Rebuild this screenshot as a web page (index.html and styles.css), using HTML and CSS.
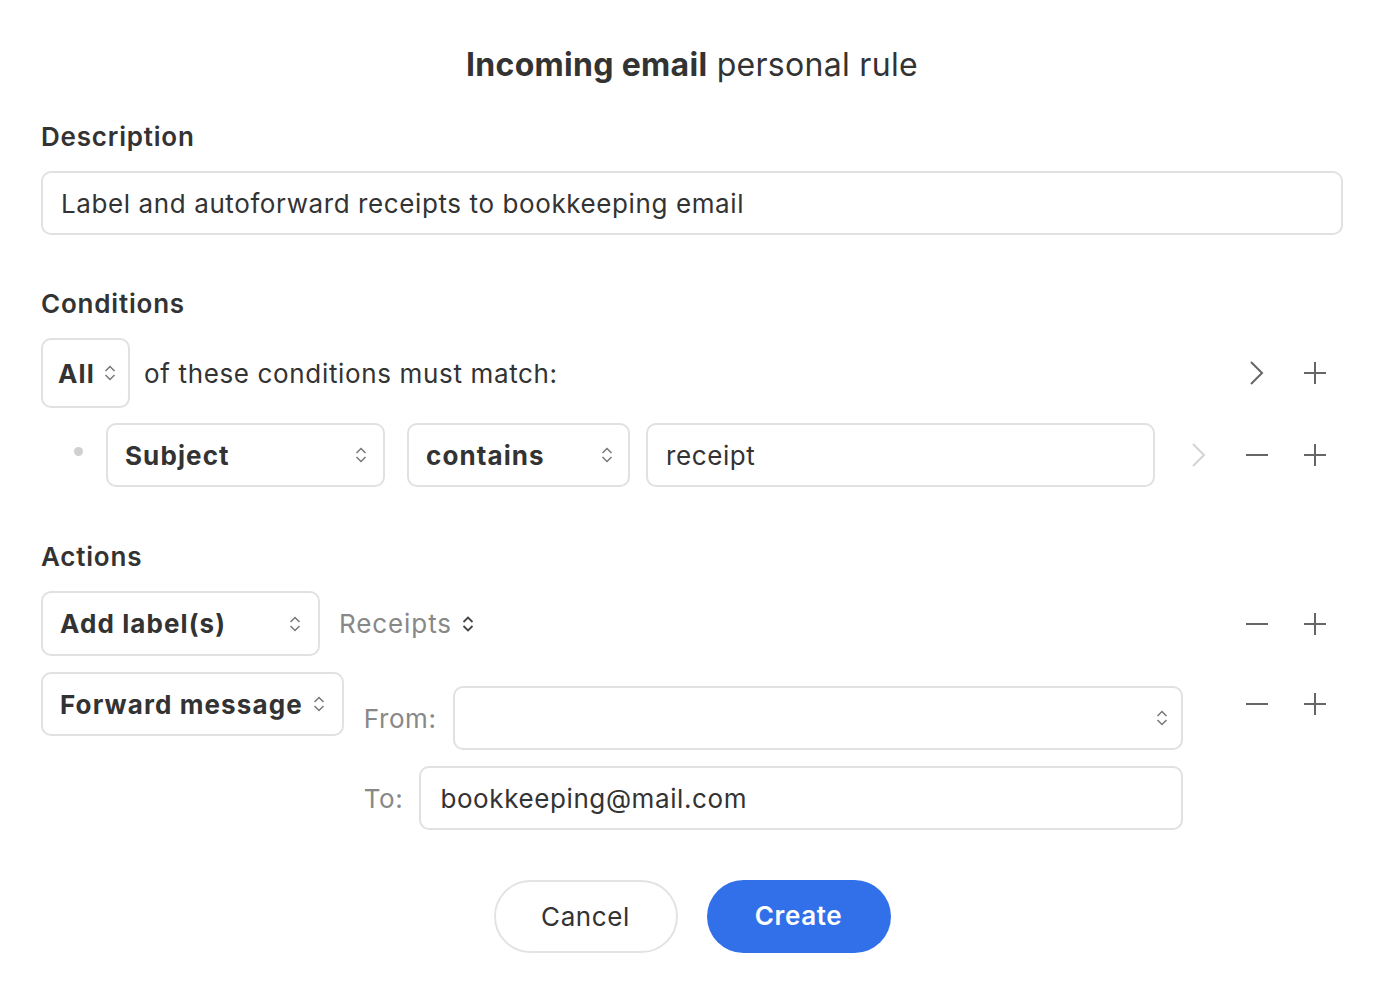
FILE: index.html
```html
<!DOCTYPE html>
<html>
<head>
<meta charset="utf-8">
<link rel="stylesheet" href="styles.css">
</head>
<body>
<div class="dialog">
  <h1 class="title"><b>Incoming email</b> personal rule</h1>

  <div class="section-label label-desc">Description</div>
  <div class="field field-desc">Label and autoforward receipts to bookkeeping email</div>

  <div class="section-label label-cond">Conditions</div>
  <div class="row row-head">
    <div class="left">
      <div class="select select-all"><span>All</span>
        <svg class="updown" width="12" height="18" viewBox="0 0 12 18"><path d="M1.5 7 L6 2.5 L10.5 7 M1.5 11 L6 15.5 L10.5 11" fill="none" stroke="#777" stroke-width="1.5"/></svg>
      </div>
      <span class="plain">of these conditions must match:</span>
    </div>
    <div class="icons">
      <svg class="ico" width="22" height="24" viewBox="0 0 22 24"><path d="M5 1 L16 12 L5 23" fill="none" stroke="#666" stroke-width="2"/></svg>
      <svg class="ico" width="22" height="22" viewBox="0 0 22 22"><path d="M11 0 V22 M0 11 H22" stroke="#666" stroke-width="2"/></svg>
    </div>
  </div>

  <div class="row row-cond">
    <div class="left">
      <span class="dot"></span>
      <div class="select select-subject"><span>Subject</span>
        <svg class="updown" width="12" height="18" viewBox="0 0 12 18"><path d="M1.5 7 L6 2.5 L10.5 7 M1.5 11 L6 15.5 L10.5 11" fill="none" stroke="#777" stroke-width="1.5"/></svg>
      </div>
      <div class="select select-contains"><span>contains</span>
        <svg class="updown" width="12" height="18" viewBox="0 0 12 18"><path d="M1.5 7 L6 2.5 L10.5 7 M1.5 11 L6 15.5 L10.5 11" fill="none" stroke="#777" stroke-width="1.5"/></svg>
      </div>
      <div class="field field-receipt">receipt</div>
    </div>
    <div class="icons">
      <svg class="ico" width="22" height="24" viewBox="0 0 22 24"><path d="M5 1 L16 12 L5 23" fill="none" stroke="#d4d4d4" stroke-width="2"/></svg>
      <svg class="ico" width="22" height="22" viewBox="0 0 22 22"><path d="M0 11 H22" stroke="#666" stroke-width="2"/></svg>
      <svg class="ico" width="22" height="22" viewBox="0 0 22 22"><path d="M11 0 V22 M0 11 H22" stroke="#666" stroke-width="2"/></svg>
    </div>
  </div>

  <div class="section-label label-act">Actions</div>
  <div class="row row-label">
    <div class="left">
      <div class="select select-addlabel"><span>Add label(s)</span>
        <svg class="updown" width="12" height="18" viewBox="0 0 12 18"><path d="M1.5 7 L6 2.5 L10.5 7 M1.5 11 L6 15.5 L10.5 11" fill="none" stroke="#777" stroke-width="1.5"/></svg>
      </div>
      <div class="ghost-select">Receipts
        <svg class="updown dark" width="12" height="18" viewBox="0 0 12 18"><path d="M1.5 7 L6 2.5 L10.5 7 M1.5 11 L6 15.5 L10.5 11" fill="none" stroke="#444" stroke-width="1.8"/></svg>
      </div>
    </div>
    <div class="icons">
      <svg class="ico" width="22" height="22" viewBox="0 0 22 22"><path d="M0 11 H22" stroke="#666" stroke-width="2"/></svg>
      <svg class="ico" width="22" height="22" viewBox="0 0 22 22"><path d="M11 0 V22 M0 11 H22" stroke="#666" stroke-width="2"/></svg>
    </div>
  </div>

  <div class="row row-forward">
    <div class="left forward-left">
      <div class="select select-forward"><span>Forward message</span>
        <svg class="updown" width="12" height="18" viewBox="0 0 12 18"><path d="M1.5 7 L6 2.5 L10.5 7 M1.5 11 L6 15.5 L10.5 11" fill="none" stroke="#777" stroke-width="1.5"/></svg>
      </div>
      <div class="forward-fields">
        <div class="ff-row">
          <span class="ff-label">From:</span>
          <div class="field field-from">
            <svg class="updown" width="12" height="18" viewBox="0 0 12 18"><path d="M1.5 7 L6 2.5 L10.5 7 M1.5 11 L6 15.5 L10.5 11" fill="none" stroke="#777" stroke-width="1.5"/></svg>
          </div>
        </div>
        <div class="ff-row">
          <span class="ff-label">To:</span>
          <div class="field field-to">bookkeeping@mail.com</div>
        </div>
      </div>
    </div>
    <div class="icons icons-top">
      <svg class="ico" width="22" height="22" viewBox="0 0 22 22"><path d="M0 11 H22" stroke="#666" stroke-width="2"/></svg>
      <svg class="ico" width="22" height="22" viewBox="0 0 22 22"><path d="M11 0 V22 M0 11 H22" stroke="#666" stroke-width="2"/></svg>
    </div>
  </div>

  <div class="buttons">
    <button class="btn btn-cancel">Cancel</button>
    <button class="btn btn-create">Create</button>
  </div>
</div>
</body>
</html>
```

FILE: styles.css
```css
* { box-sizing: border-box; }
html, body {
  margin: 0;
  padding: 0;
  background: #fff;
}
body {
  font-family: Inter, "Noto Sans", sans-serif;
  color: #333;
  letter-spacing: 0.6px;
}
.dialog {
  width: 1384px;
  padding: 45px 41px 0 41px;
}
.title {
  margin: 0;
  text-align: center;
  font-size: 32px;
  line-height: 40px;
  font-weight: 400;
  color: #333;
  letter-spacing: 0.3px;
}
.title b { font-weight: 700; }

.section-label {
  font-size: 26px;
  line-height: 32px;
  font-weight: 600;
  color: #333;
  letter-spacing: 0.8px;
}
.label-desc { margin-top: 36px; }
.label-cond { margin-top: 53px; }
.label-act { margin-top: 54px; }

.field {
  border: 2px solid #e1e1e1;
  border-radius: 10px;
  font-size: 26px;
  display: flex;
  align-items: center;
  color: #333;
}
.field-desc {
  margin-top: 18px;
  height: 64px;
  padding-left: 18px;
}

.row {
  display: flex;
  justify-content: space-between;
  align-items: center;
}
.left {
  display: flex;
  align-items: center;
}
.icons {
  display: flex;
  align-items: center;
  gap: 36px;
  padding-right: 17px;
  flex: none;
}
.ico { display: block; }

.row-head { margin-top: 18px; }
.select {
  border: 2px solid #e1e1e1;
  border-radius: 10px;
  display: flex;
  align-items: center;
  justify-content: space-between;
  font-size: 26px;
  font-weight: 700;
  color: #333;
  height: 64px;
  letter-spacing: 1.1px;
  flex: none;
}
.updown { display: block; flex: none; }
.select-all {
  width: 89px;
  height: 70px;
  padding: 0 12px 0 15px;
}
.plain {
  font-size: 26px;
  margin-left: 14px;
  color: #333;
  letter-spacing: 0.65px;
}

.row-cond { margin-top: 15px; }
.dot {
  width: 9px;
  height: 9px;
  border-radius: 50%;
  background: #d0d0d0;
  margin-left: 33px;
  margin-right: 23px;
  margin-top: -8px;
}
.select-subject {
  width: 279px;
  padding: 0 16px 0 17px;
}
.select-contains {
  width: 223px;
  margin-left: 22px;
  padding: 0 15px 0 17px;
}
.field-receipt {
  width: 509px;
  height: 64px;
  margin-left: 16px;
  padding-left: 18px;
}

.row-label { margin-top: 18px; }
.select-addlabel {
  width: 279px;
  height: 65px;
  padding: 0 17px 0 17px;
}
.ghost-select {
  margin-left: 19px;
  font-size: 26px;
  color: #888;
  display: flex;
  align-items: center;
  gap: 10px;
  letter-spacing: 0.9px;
}

.row-forward {
  margin-top: 16px;
  align-items: flex-start;
}
.forward-left {
  align-items: flex-start;
  flex: 1;
  margin-right: 63px;
}
.select-forward {
  padding: 0 17px 0 17px;
  gap: 10px;
}
.forward-fields {
  margin-left: 20px;
  margin-top: 14px;
  flex: 1;
  display: flex;
  flex-direction: column;
  gap: 16px;
}
.ff-row {
  display: flex;
  align-items: center;
}
.ff-label {
  font-size: 26px;
  color: #888;
  margin-right: 16px;
}
.field-from {
  flex: 1;
  height: 64px;
  justify-content: flex-end;
  padding-right: 13px;
}
.field-to {
  flex: 1;
  height: 64px;
  padding-left: 19px;
}
.icons-top {
  height: 64px;
}

.buttons {
  display: flex;
  justify-content: center;
  gap: 29px;
  margin-top: 50px;
}
.btn {
  height: 73px;
  width: 184px;
  border-radius: 37px;
  font-family: Inter, "Noto Sans", sans-serif;
  font-size: 26px;
  letter-spacing: 0.6px;
  cursor: pointer;
}
.btn-cancel {
  background: #fff;
  border: 2px solid #e3e3e3;
  color: #333;
  font-weight: 400;
}
.btn-create {
  background: #3270ea;
  border: none;
  color: #fff;
  font-weight: 600;
  padding-bottom: 4px;
}
```
